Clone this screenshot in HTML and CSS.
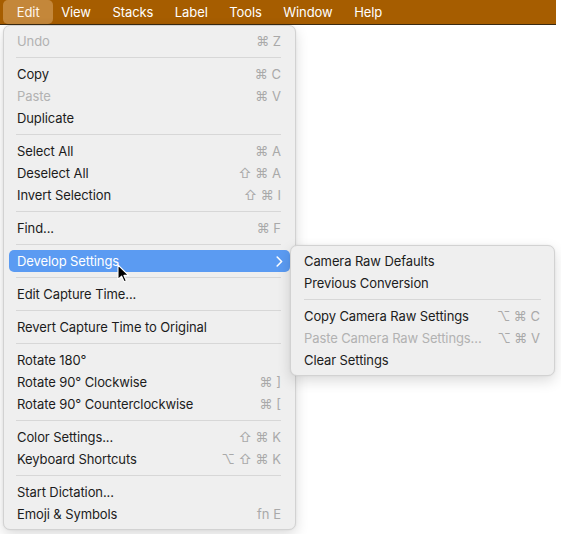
FILE: index.html
```html
<!DOCTYPE html>
<html lang="en">
<head>
<meta charset="utf-8">
<title>Edit menu</title>
<link rel="stylesheet" href="styles.css">
</head>
<body>
<div class="menubar">
  <div class="mb-item active">Edit</div>
  <div class="mb-item">View</div>
  <div class="mb-item">Stacks</div>
  <div class="mb-item">Label</div>
  <div class="mb-item">Tools</div>
  <div class="mb-item">Window</div>
  <div class="mb-item">Help</div>
</div>
<div class="desk"></div>

<div class="menu main-menu">
  <div class="item disabled"><span>Undo</span><span class="key">⌘ Z</span></div>
  <div class="sep"></div>
  <div class="item"><span>Copy</span><span class="key">⌘ C</span></div>
  <div class="item disabled"><span>Paste</span><span class="key">⌘ V</span></div>
  <div class="item"><span>Duplicate</span></div>
  <div class="sep"></div>
  <div class="item"><span>Select All</span><span class="key">⌘ A</span></div>
  <div class="item"><span>Deselect All</span><span class="key">⇧ ⌘ A</span></div>
  <div class="item"><span>Invert Selection</span><span class="key">⇧ ⌘ I</span></div>
  <div class="sep"></div>
  <div class="item"><span>Find...</span><span class="key">⌘ F</span></div>
  <div class="sep"></div>
  <div class="item selected"><span>Develop Settings</span>
    <svg class="chev" width="7" height="11" viewBox="0 0 7 11"><polyline points="1.2,1 5.6,5.5 1.2,10" fill="none" stroke="#fff" stroke-width="1.6" stroke-linecap="round" stroke-linejoin="round"/></svg>
  </div>
  <div class="sep"></div>
  <div class="item"><span>Edit Capture Time...</span></div>
  <div class="sep"></div>
  <div class="item"><span>Revert Capture Time to Original</span></div>
  <div class="sep"></div>
  <div class="item"><span>Rotate 180°</span></div>
  <div class="item"><span>Rotate 90° Clockwise</span><span class="key">⌘ ]</span></div>
  <div class="item"><span>Rotate 90° Counterclockwise</span><span class="key">⌘ [</span></div>
  <div class="sep"></div>
  <div class="item"><span>Color Settings...</span><span class="key">⇧ ⌘ K</span></div>
  <div class="item"><span>Keyboard Shortcuts</span><span class="key">⌥ ⇧ ⌘ K</span></div>
  <div class="sep"></div>
  <div class="item"><span>Start Dictation...</span></div>
  <div class="item"><span>Emoji &amp; Symbols</span><span class="key">fn E</span></div>
</div>

<div class="menu sub-menu">
  <div class="item"><span>Camera Raw Defaults</span></div>
  <div class="item"><span>Previous Conversion</span></div>
  <div class="sep"></div>
  <div class="item"><span>Copy Camera Raw Settings</span><span class="key">⌥ ⌘ C</span></div>
  <div class="item disabled"><span>Paste Camera Raw Settings...</span><span class="key">⌥ ⌘ V</span></div>
  <div class="item"><span>Clear Settings</span></div>
</div>

<svg class="cursor" width="13" height="19" viewBox="0 0 13 19">
  <path d="M1,1 L1,15.5 L4.6,12.2 L7.2,17.8 L9.4,16.8 L6.9,11.4 L11.6,11.4 Z" fill="#000" stroke="#fff" stroke-width="1.1" stroke-linejoin="round"/>
</svg>
</body>
</html>
```

FILE: styles.css
```css
* { box-sizing: border-box; }

html, body {
  margin: 0;
  padding: 0;
}

body {
  width: 561px;
  height: 534px;
  overflow: hidden;
  position: relative;
  background: #ffffff;
  font-family: Inter, "Liberation Sans", "DejaVu Sans", sans-serif;
  font-size: 13px;
  color: #1c1c1c;
}

.menubar {
  width: 556px;
  height: 25px;
  background: #a65d00;
  border-bottom: 1px solid #3a2a12;
  display: flex;
  align-items: center;
  padding-left: 6px;
  color: #ffffff;
  letter-spacing: -0.1px;
}

.mb-item {
  position: relative;
  padding: 0 10.8px;
  line-height: 24px;
  height: 24px;
}

.mb-item.active::before {
  content: "";
  position: absolute;
  top: 0;
  bottom: 0;
  left: -3px;
  right: -3px;
  background: #c4873a;
  border-radius: 5px;
  z-index: -1;
}

.mb-item.active {
  z-index: 0;
  color: #fff6ea;
}

.desk {
  height: 509px;
  background: #ffffff;
}

.menu {
  position: absolute;
  background: #efefef;
  border: 1px solid #d2d2d2;
  border-radius: 7px;
  padding: 4px 0;
  box-shadow: 0 5px 14px rgba(0, 0, 0, 0.14), 0 0 2px rgba(0, 0, 0, 0.08);
  letter-spacing: -0.1px;
}

.main-menu {
  left: 3px;
  top: 25px;
  width: 293px;
}

.sub-menu {
  left: 290px;
  top: 245px;
  width: 265px;
}

.item {
  height: 22px;
  margin: 0 5px;
  padding: 0 9px 0 8px;
  display: flex;
  align-items: center;
  justify-content: space-between;
  border-radius: 5px;
  white-space: nowrap;
}

.item.disabled {
  color: #b2b2b2;
}

.key {
  color: #a9a9a9;
  font-size: 13px;
  letter-spacing: 0;
}

.item.selected {
  background: #5b9bf2;
  color: #ffffff;
  padding-right: 7px;
}

.chev {
  display: block;
}

.sep {
  height: 1px;
  background: #d7d7d7;
  margin: 5px 14px 5px 12px;
}

.sub-menu .sep {
  margin: 5px 13px;
}

.cursor {
  position: absolute;
  left: 117px;
  top: 264px;
}
```
